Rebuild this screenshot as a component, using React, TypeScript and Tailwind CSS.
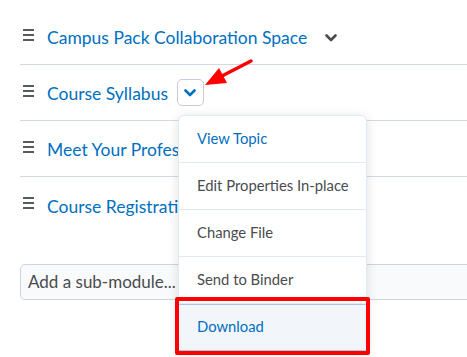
const rows = [
  { title: 'Campus Pack Collaboration Space', open: false },
  { title: 'Course Syllabus', open: true },
  { title: 'Meet Your Professor', open: false },
  { title: 'Course Registration', open: false },
]

const menuItems = [
  { label: 'View Topic', blue: true },
  { label: 'Edit Properties In-place', blue: false },
  { label: 'Change File', blue: false },
  { label: 'Send to Binder', blue: false },
]

function Handle() {
  return (
    <svg width="11" height="12" viewBox="0 0 11 12" className="shrink-0">
      <rect x="0" y="0" width="11" height="2" fill="#565a5c" />
      <rect x="0" y="5" width="11" height="2" fill="#565a5c" />
      <rect x="0" y="10" width="11" height="2" fill="#565a5c" />
    </svg>
  )
}

function Chevron({ color }: { color: string }) {
  return (
    <svg width="12" height="8" viewBox="0 0 12 8">
      <polyline points="1.5,1.5 6,6 10.5,1.5" fill="none" stroke={color} strokeWidth="2.6" strokeLinecap="round" strokeLinejoin="round" />
    </svg>
  )
}

export default function App() {
  return (
    <div className="relative w-[467px] h-[357px] overflow-hidden bg-white font-['Lato','Noto_Sans',sans-serif]">
      <div className="pl-5 pt-[9px]">
        {rows.map((row, idx) => (
          <div
            key={row.title}
            className={`flex items-center h-[56px] ${idx < rows.length - 1 ? 'border-b border-[#d3d9e3]' : ''}`}
          >
            <div className="w-[27px] pl-[3px] pb-[4px] flex items-center">
              <Handle />
            </div>
            <span className="pt-[4px] text-[17.5px] text-[#006fbf] whitespace-nowrap">{row.title}</span>
            {idx === 0 && (
              <button className="ml-[10px] mt-[2px] w-[27px] h-[27px] flex items-center justify-center">
                <Chevron color="#494c4e" />
              </button>
            )}
            {row.open && (
              <button className="ml-[9px] w-[27px] h-[27px] flex items-center justify-center rounded-[5px] border border-[#c7ccd3] bg-white">
                <Chevron color="#006fbf" />
              </button>
            )}
          </div>
        ))}

        {/* Sub-module input */}
        <div className="mt-[31px] h-[36px] -mr-2 flex items-center pl-[7px] rounded-l-[5px] border border-[#cdd5dc] bg-[#f9fafb] text-[17px] text-[#494c4e] whitespace-nowrap">
          Add a sub-module...
        </div>
      </div>

      {/* Context menu */}
      <div className="absolute left-[178px] top-[115px] w-[189px] bg-white border border-[#e3e9f1] rounded-[6px] shadow-[0_2px_12px_rgba(0,0,0,0.12)]">
        {menuItems.map((item) => (
          <div
            key={item.label}
            className={`h-[47px] flex items-center pl-[18px] pb-[2px] text-[14.8px] border-b border-[#e3e9f1] ${item.blue ? 'text-[#006fbf]' : 'text-[#494c4e]'}`}
          >
            {item.label}
          </div>
        ))}
        <div className="h-[47px] flex items-center pl-[18px] pb-[2px] text-[14.8px] text-[#006fbf] bg-[#f2f6fb] border-y border-[#a9c6e4]">
          Download
        </div>
      </div>

      {/* Annotation highlight */}
      <div className="absolute left-[175px] top-[297px] w-[195px] h-[58px] border-4 border-[#ff0000] rounded-[2px]" />

      {/* Annotation arrow */}
      <svg className="absolute left-0 top-0" width="467" height="357">
        <line x1="251" y1="61" x2="220" y2="77" stroke="#ff0000" strokeWidth="3.5" strokeLinecap="round" />
        <polygon points="205,85 219,68 227,83" fill="#ff0000" />
      </svg>
    </div>
  )
}
